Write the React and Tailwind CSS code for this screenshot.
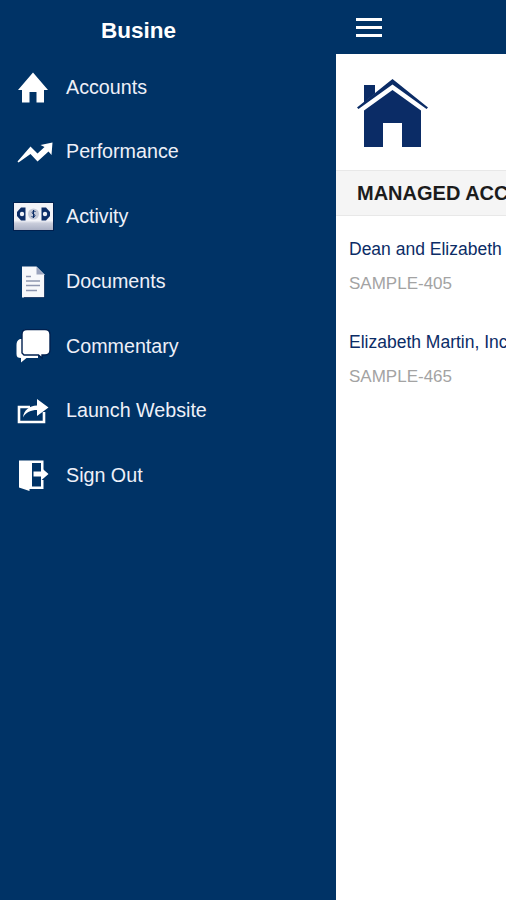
const font = { fontFamily: '"Liberation Sans", Arial, sans-serif' };

function HomeIcon() {
  return (
    <svg width="30" height="31" viewBox="0 0 30 31" fill="white">
      <path d="M15 0.5 L30 18 L26 18 L26 30.5 L18.5 30.5 L18.5 20 L11.5 20 L11.5 30.5 L4 30.5 L4 18 L0 18 Z" />
    </svg>
  );
}

function TrendIcon() {
  return (
    <svg width="36" height="21" viewBox="0 0 36 21" fill="white">
      <path d="M0.5 19.5 L13.5 4.5 L20.5 11.5 L27.5 5 L23.5 3 L35.5 0.5 L34.5 13 L31.5 9.5 L20.5 19.5 L13.5 12 L1.5 20.5 Z" />
    </svg>
  );
}

function MoneyIcon() {
  return (
    <svg width="41" height="29" viewBox="0 0 41 29">
      <defs>
        <linearGradient id="moneyFade" x1="0" y1="0" x2="0" y2="1">
          <stop offset="0.65" stopColor="#f2f3f8" />
          <stop offset="0.75" stopColor="#c9cddb" />
          <stop offset="1" stopColor="#aab0c4" />
        </linearGradient>
      </defs>
      <rect x="0" y="0" width="41" height="29" fill="#00204f" />
      <rect x="1" y="1" width="39" height="27" fill="url(#moneyFade)" />
      <path d="M4 10 L8 5.5 L12.5 5.5 L12.5 18.5 L8 18.5 L4 14 Z" fill="#0b2c66" />
      <path d="M37 10 L33 5.5 L28.5 5.5 L28.5 18.5 L33 18.5 L37 14 Z" fill="#0b2c66" />
      <circle cx="9" cy="12" r="2.2" fill="#eef0f6" />
      <circle cx="32" cy="12" r="2.2" fill="#eef0f6" />
      <circle cx="20.5" cy="12" r="5.5" fill="#c4c9d8" />
      <path d="M22.5 9.5 C20 8.5 18.5 10 19.5 11.5 C20.5 12.5 22.5 12.5 22 14 C21 15.5 19.5 15 18.5 14.5 M20.5 8 L20.5 16" fill="none" stroke="#0b2c66" strokeWidth="1" />
    </svg>
  );
}

function DocIcon() {
  return (
    <svg width="24" height="32" viewBox="0 0 24 32">
      <path d="M1 0.5 L15.5 0.5 L23.5 8.5 L23.5 31.5 L1 31.5 Z" fill="#f7f8fb" />
      <path d="M15.5 1 L23 8.5 L15.5 8.5 Z" fill="#9aa3bd" />
      <path d="M23.8 9 L23.8 31.8 L3 31.8" fill="none" stroke="#00204f" strokeWidth="1" />
      <path d="M5 10.5 L10 10.5 M5 15 L19 15 M5 19.5 L19 19.5 M5 24.5 L16 24.5" stroke="#8e96b0" strokeWidth="1.4" />
    </svg>
  );
}

function ChatIcon() {
  return (
    <svg width="35" height="34" viewBox="0 0 35 34">
      <path d="M4 10 C1.5 11 0.5 13 0.5 16 L0.5 25 C0.5 28 2 29 5 29 L5 33.5 L10.5 29 L22 29 L22 22 L8 10 Z" fill="white" />
      <path d="M11 0.5 L29 0.5 C32.5 0.5 34 2 34 5.5 L34 21 C34 24.5 32.5 26 29 26 L26 26 L26 29 L22.5 26 L8 26 L6 24 L6 5.5 C6 2 7.5 0.5 11 0.5 Z" fill="white" stroke="#00204f" strokeWidth="1.4" />
    </svg>
  );
}

function ShareIcon() {
  return (
    <svg width="32" height="26" viewBox="0 0 32 26">
      <path d="M27 14 L27 24 L2 24 L2 9 L13 9" fill="none" stroke="white" strokeWidth="2.6" />
      <path d="M6 19.5 C7 12 12 8 20 7.5 L20 1 L31.5 9.5 L20 18 L20 12 C14 12 9 14 6 19.5 Z" fill="white" />
    </svg>
  );
}

function ExitIcon() {
  return (
    <svg width="31" height="31" viewBox="0 0 31 31" fill="white">
      <path d="M1 0.5 L25.5 0.5 L25.5 10 L23 10 L23 3 L14 3 L14 29 L11.5 29 L11.5 31 L1 27.5 Z" />
      <path d="M23 20 L25.5 20 L25.5 29 L14 29 L14 26.5 L23 26.5 Z" />
      <path d="M15.5 11.5 L23 11.5 L23 7.5 L30.5 14 L23 20.5 L23 16.5 L15.5 16.5 Z" />
    </svg>
  );
}

function BigHouse() {
  return (
    <svg width="71" height="69" viewBox="0 0 71 69" fill="#0b2c66">
      <path d="M7 6 L18 6 L18 14.5 L7 23.5 Z" />
      <path d="M0 28.5 L35.5 0 L71 28.5 L69.5 30 L35.5 5.5 L1.5 30 Z" />
      <path d="M35.5 11 L64 31.5 L64 68 L45 68 L45 44 L26 44 L26 68 L7 68 L7 31.5 Z" />
    </svg>
  );
}

const items = [
  { label: 'Accounts', icon: <HomeIcon /> },
  { label: 'Performance', icon: <div className="ml-[3px]"><TrendIcon /></div> },
  { label: 'Activity', icon: <MoneyIcon /> },
  { label: 'Documents', icon: <DocIcon /> },
  { label: 'Commentary', icon: <ChatIcon /> },
  { label: 'Launch Website', icon: <ShareIcon /> },
  { label: 'Sign Out', icon: <ExitIcon /> },
];

export default function App() {
  return (
    <div className="flex h-[900px] w-[506px] overflow-hidden bg-[#003366]" style={font}>
      {/* Sidebar */}
      <div className="w-[336px] shrink-0">
        <div className="h-[55px] pl-[101px] pt-[16px] text-[22.5px] leading-[30px] font-bold text-white">
          Busine
        </div>
        <nav>
          {items.map((item) => (
            <div key={item.label} className="flex h-[64.75px] items-center">
              <div className="flex w-[66px] shrink-0 justify-center">{item.icon}</div>
              <span className="text-[19.7px] text-[#eef0f8]">{item.label}</span>
            </div>
          ))}
        </nav>
      </div>

      {/* Main */}
      <div className="flex min-w-0 flex-1 flex-col">
        <div className="flex h-[54px] shrink-0 items-center pl-[20px]">
          <div className="flex w-[26px] flex-col gap-[5px]">
            <div className="h-[3px] bg-white"></div>
            <div className="h-[3px] bg-white"></div>
            <div className="h-[3px] bg-white"></div>
          </div>
        </div>
        <div className="flex-1 overflow-hidden bg-white">
          <div className="flex h-[116px] items-start pl-[21px] pt-[25px]">
            <BigHouse />
          </div>
          <div className="flex h-[46px] items-center overflow-hidden whitespace-nowrap border-y border-[#e8e8e8] bg-[#f5f5f5] pl-[21px] text-[20px] font-bold text-[#1c1c1c]">
            MANAGED ACC
          </div>
          <div className="pl-[13px] pt-[22px] whitespace-nowrap">
            <div className="h-[93px]">
              <div className="text-[17.5px] leading-[22px] text-[#0b2c66]">Dean and Elizabeth</div>
              <div className="mt-[13px] text-[17px] leading-[22px] text-[#a3a3a3]">SAMPLE-405</div>
            </div>
            <div>
              <div className="text-[17.5px] leading-[22px] text-[#0b2c66]">Elizabeth Martin, Inc</div>
              <div className="mt-[13px] text-[17px] leading-[22px] text-[#a3a3a3]">SAMPLE-465</div>
            </div>
          </div>
        </div>
      </div>
    </div>
  );
}
